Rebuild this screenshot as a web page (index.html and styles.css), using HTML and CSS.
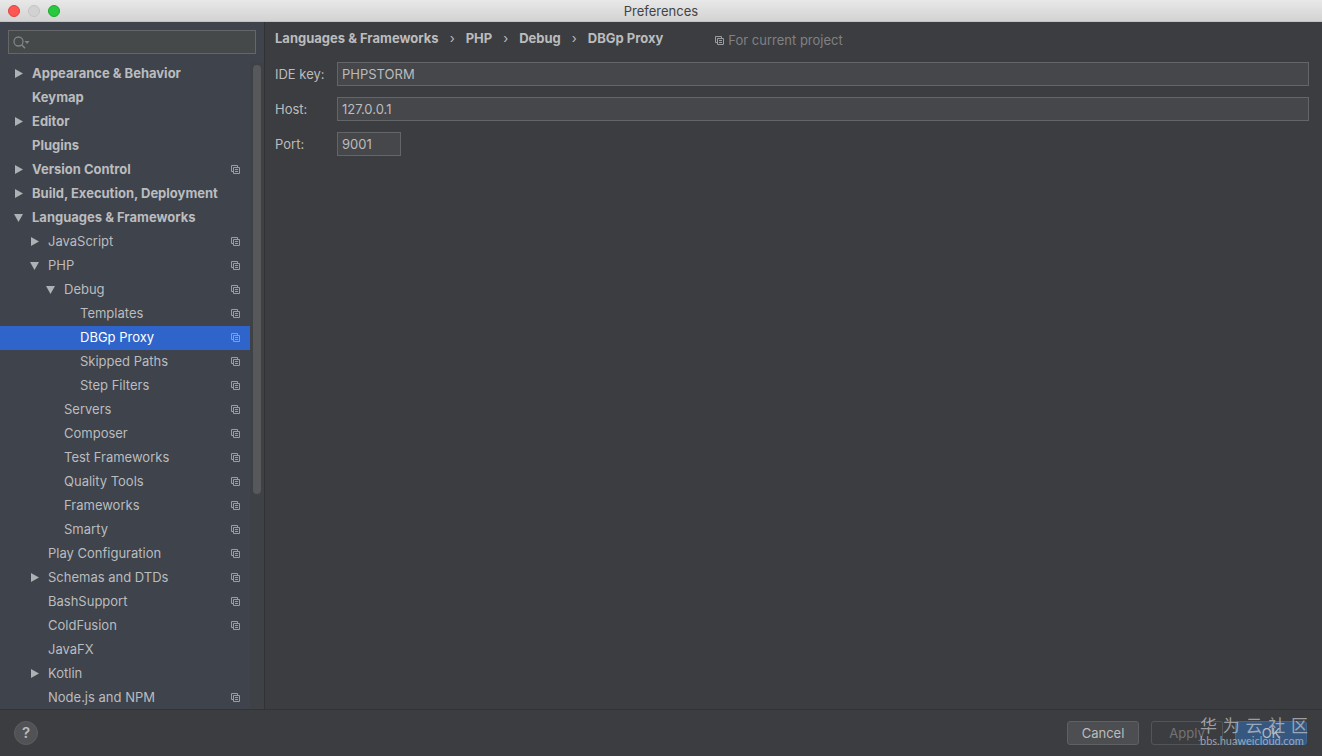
FILE: index.html
```
<!DOCTYPE html>
<html lang="en">
<head>
  <meta charset="UTF-8" />
  <meta name="viewport" content="width=device-width, initial-scale=1.0"/>
  <title>Preferences</title>
  <link rel="stylesheet" href="styles.css">
</head>
<body>
  <svg class="sprites" aria-hidden="true">
    <symbol id="copy" viewBox="0 0 9 9">
      <path d="M2.5 6.5h-2v-6h6v2M2.5 2.5h6v6h-6zM4 4.5h3M4 6.5h3" fill="none" stroke="currentColor"/>
    </symbol>
    <symbol id="closed" viewBox="0 0 9 9"><path d="M1 0l8 4.500-8 4.500z" fill="currentColor"/></symbol>
    <symbol id="open" viewBox="0 0 9 9"><path d="M0 1h9l-4.500 8z" fill="currentColor"/></symbol>
  </svg>

  <header class="titlebar">
    <div class="lights">
      <button class="light close" aria-label="Close"></button>
      <button class="light minimize" aria-label="Minimize" disabled></button>
      <button class="light zoom" aria-label="Zoom"></button>
    </div>
    <h1>Preferences</h1>
  </header>

  <main class="main">
    <aside class="sidebar">
      <div class="search">
        <svg width="17" height="13" viewBox="0 0 17 13" aria-hidden="true">
          <circle cx="5.500" cy="5.500" r="4.500" fill="none" stroke="currentColor" stroke-width="1.300"/>
          <path d="M8.700 8.700l3.300 3.600" stroke="currentColor" stroke-width="1.600"/>
          <path d="M11.500 5h5l-2.500 3z" fill="currentColor"/>
        </svg>
        <input type="text" aria-label="Search settings">
      </div>

      <div class="tree-area">
        <ul class="tree" id="tree"></ul>
        <div class="scrollbar"><div class="thumb"></div></div>
      </div>
    </aside>

    <section class="content">
      <div class="heading">
        <nav class="breadcrumbs">
          <a href="#">Languages &amp; Frameworks</a>
          <span>›</span>
          <a href="#">PHP</a>
          <span>›</span>
          <a href="#">Debug</a>
          <span>›</span>
          <a href="#">DBGp Proxy</a>
        </nav>
        <div class="scope"><svg class="copy"><use href="#copy"/></svg>For current project</div>
      </div>

      <form class="form">
        <label for="ideKey">IDE key:</label>
        <input type="text" id="ideKey" value="PHPSTORM">
        <label for="host">Host:</label>
        <input type="text" id="host" value="127.0.0.1">
        <label for="port">Port:</label>
        <input type="text" id="port" class="short" value="9001">
      </form>
    </section>
  </main>

  <footer class="footer">
    <button class="help" aria-label="Help">?</button>
    <div class="actions">
      <button class="btn">Cancel</button>
      <button class="btn" disabled>Apply</button>
      <button class="btn primary">OK</button>
    </div>
    <div class="watermark">
      <div class="watermark-name"><span>华</span><span>为</span><span>云</span><span>社</span><span>区</span></div>
      <div class="watermark-url">bbs.huaweicloud.com</div>
    </div>
  </footer>

  <script>
    // label, level, arrow, has project icon
    const items = [
      ['Appearance & Behavior', 0, 'closed', false],
      ['Keymap', 0, '', false],
      ['Editor', 0, 'closed', false],
      ['Plugins', 0, '', false],
      ['Version Control', 0, 'closed', true],
      ['Build, Execution, Deployment', 0, 'closed', false],
      ['Languages & Frameworks', 0, 'open', false],
      ['JavaScript', 1, 'closed', true],
      ['PHP', 1, 'open', true],
      ['Debug', 2, 'open', true],
      ['Templates', 3, '', true],
      ['DBGp Proxy', 3, '', true],
      ['Skipped Paths', 3, '', true],
      ['Step Filters', 3, '', true],
      ['Servers', 2, '', true],
      ['Composer', 2, '', true],
      ['Test Frameworks', 2, '', true],
      ['Quality Tools', 2, '', true],
      ['Frameworks', 2, '', true],
      ['Smarty', 2, '', true],
      ['Play Configuration', 1, '', true],
      ['Schemas and DTDs', 1, 'closed', true],
      ['BashSupport', 1, '', true],
      ['ColdFusion', 1, '', true],
      ['JavaFX', 1, '', false],
      ['Kotlin', 1, 'closed', false],
      ['Node.js and NPM', 1, '', true]
    ];
    const selected = 'DBGp Proxy';

    document.getElementById('tree').innerHTML = items.map(([label, level, arrow, project]) => `
      <li>
        <a href="#" class="row level-${level} ${label === selected ? 'selected' : ''}">
          <span class="arrow">${arrow ? `<svg><use href="#${arrow}"/></svg>` : ''}</span>
          <span class="label">${label.replace('&', '&amp;')}</span>
          ${project ? '<svg class="copy"><use href="#copy"/></svg>' : ''}
        </a>
      </li>`).join('');
  </script>
</body>
</html>
```
FILE: styles.css
```
* {
  box-sizing: border-box;
}

body {
  margin: 0;
  height: 100vh;
  display: flex;
  flex-direction: column;
  overflow: hidden;
  background-color: #3c3d40;
  color: #bbbcbe;
  font-family: Inter, "Noto Sans CJK SC", sans-serif;
  font-size: 13px;
  line-height: 16px;
}

button, input {
  font: inherit;
  color: inherit;
}

a {
  color: inherit;
  text-decoration: none;
}

.sprites {
  display: none;
}

.titlebar {
  flex: none;
  height: 22px;
  display: grid;
  grid-template-columns: 1fr auto 1fr;
  align-items: center;
  padding: 0 8px;
  background: linear-gradient(#e8e8e8, #d3d3d3);
  border-bottom: 1px solid #c2c3c5;
}

.titlebar h1 {
  margin: 0;
  font-size: 13px;
  font-weight: 400;
  color: #444;
}

.lights {
  display: flex;
  gap: 8px;
}

.light {
  width: 12px;
  height: 12px;
  padding: 0;
  border: 1px solid #c4c4c4;
  border-radius: 50%;
  background: #d2d2d2;
}

.close {
  background: #fc5753;
  border-color: #e0443e;
}

.zoom {
  background: #28c940;
  border-color: #1aab29;
}

.main {
  flex: 1;
  min-height: 0;
  display: flex;
}

.sidebar {
  flex: none;
  width: 265px;
  display: flex;
  flex-direction: column;
  padding-top: 8px;
  background: #3e434c;
  border-right: 1px solid #303234;
}

.search {
  height: 24px;
  margin: 0 8px 8px;
  padding-left: 4px;
  display: flex;
  align-items: center;
  background: #45494a;
  border: 1px solid #646667;
  color: #7f8485;
}

.search input {
  flex: 1;
  min-width: 0;
  border: none;
  background: none;
  outline: none;
}

.tree-area {
  flex: 1;
  min-height: 0;
  display: flex;
}

.tree {
  flex: 1;
  margin: 0;
  padding: 0;
  list-style: none;
  overflow: hidden;
}

.row {
  height: 24px;
  display: flex;
  align-items: center;
  padding-right: 10px;
  padding-bottom: 2px;
}

.level-0 { padding-left: 14px; font-weight: 700; }
.level-1 { padding-left: 30px; }
.level-2 { padding-left: 46px; }
.level-3 { padding-left: 62px; }

.arrow {
  width: 18px;
  display: flex;
  color: #adb0b4;
}

.arrow svg, .copy {
  width: 9px;
  height: 9px;
}

.label {
  flex: 1;
  white-space: nowrap;
}

.copy {
  flex: none;
  color: #9a9da2;
}

.selected {
  background: #2f65ca;
  color: #fff;
}

.scrollbar {
  width: 14px;
  padding: 3px;
  background: #3e4246;
}

.thumb {
  width: 8px;
  height: 67%;
  border-radius: 4px;
  background: #565859;
}

.content {
  flex: 1;
  min-width: 0;
  padding: 8px 13px 8px 10px;
}

.heading {
  display: flex;
  align-items: center;
  gap: 52px;
  margin-bottom: 16px;
}

.breadcrumbs {
  display: flex;
  gap: 11px;
  font-weight: 700;
}

.breadcrumbs span {
  font-weight: 400;
}

.scope {
  display: flex;
  align-items: center;
  gap: 4px;
  padding-top: 2px;
  margin-bottom: -2px;
  color: #808184;
}

.form {
  display: grid;
  grid-template-columns: 62px 1fr;
  row-gap: 11px;
  align-items: center;
}

.form input {
  width: 100%;
  height: 24px;
  padding: 0 4px;
  border: 1px solid #646567;
  background: #46474a;
  outline: none;
}

.form .short {
  width: 64px;
}

.footer {
  flex: none;
  position: relative;
  height: 47px;
  display: flex;
  align-items: center;
  justify-content: space-between;
  padding: 0 15px 0 14px;
  border-top: 1px solid #323335;
}

.help {
  width: 24px;
  height: 24px;
  padding: 0;
  border: 1px solid #5c5d5f;
  border-radius: 50%;
  background: #515255;
  font-size: 15px;
  font-weight: 600;
}

.actions {
  display: flex;
  gap: 12px;
}

.btn {
  width: 72px;
  height: 24px;
  padding: 0;
  border: 1px solid #5e6062;
  border-radius: 3px;
  background: #4c4e51;
}

.btn:disabled {
  background: none;
  border-color: #545557;
  color: #737476;
}

.primary {
  background: #365880;
  border-color: #3f6690;
}

.watermark {
  position: absolute;
  right: 14px;
  bottom: 8px;
  width: 108px;
  color: rgba(200, 203, 207, 0.7);
  font-family: Lato, "Noto Sans CJK SC", sans-serif;
  font-size: 11px;
  line-height: 14px;
  pointer-events: none;
}

.watermark-name {
  display: flex;
  justify-content: space-between;
  font-size: 17px;
  line-height: 17px;
}

.watermark-url {
  white-space: nowrap;
}
```
